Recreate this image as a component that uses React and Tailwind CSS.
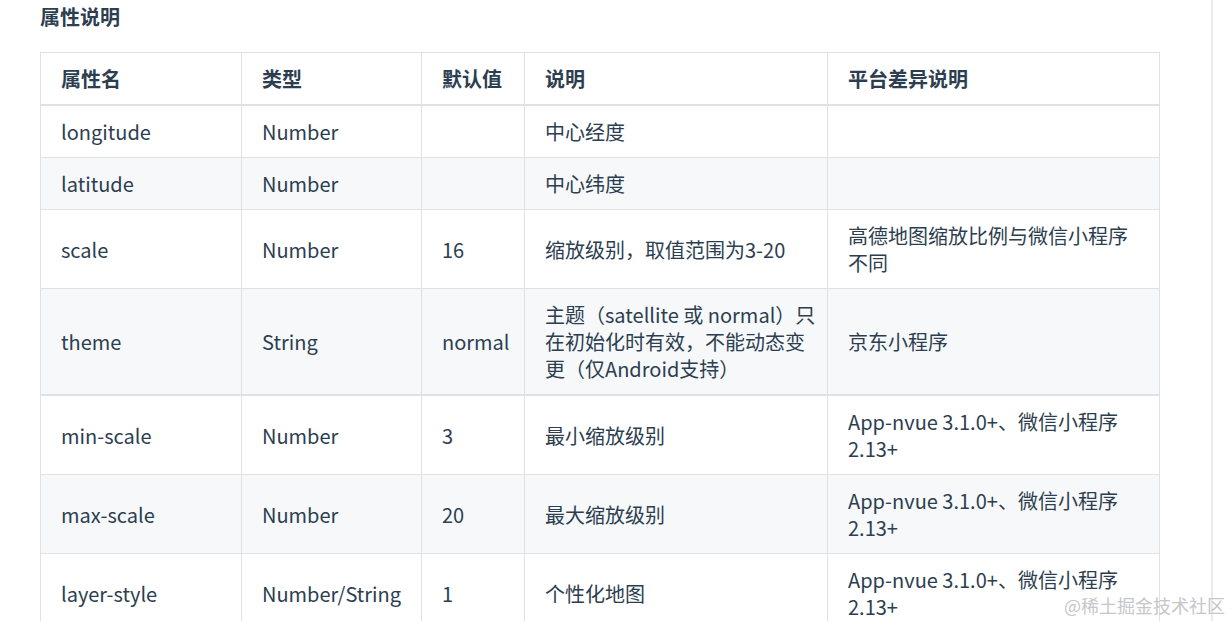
import React from "react";

const rows = [
  ["longitude", "Number", "", ["中心经度"], [""]],
  ["latitude", "Number", "", ["中心纬度"], [""]],
  ["scale", "Number", "16", ["缩放级别，取值范围为3-20"], ["高德地图缩放比例与微信小程序", "不同"]],
  [
    "theme",
    "String",
    "normal",
    ["主题（satellite 或 normal）只", "在初始化时有效，不能动态变", "更（仅Android支持）"],
    ["京东小程序"],
  ],
  ["min-scale", "Number", "3", ["最小缩放级别"], ["App-nvue 3.1.0+、微信小程序", "2.13+"]],
  ["max-scale", "Number", "20", ["最大缩放级别"], ["App-nvue 3.1.0+、微信小程序", "2.13+"]],
  ["layer-style", "Number/String", "1", ["个性化地图"], ["App-nvue 3.1.0+、微信小程序", "2.13+"]],
];

function Lines({ lines }) {
  return lines.map((l, i) => (
    <span key={i} className="block whitespace-nowrap">
      {l || "\u00a0"}
    </span>
  ));
}

export default function App() {
  const font = { fontFamily: '"Noto Sans CJK SC", "Noto Sans", sans-serif' };
  const td = "border border-[#dfe2e5] px-[20px] py-[12px] align-middle";
  return (
    <div
      className="relative flex h-[621px] w-[1232px] overflow-hidden bg-white text-[#2c3e50]"
      style={font}
    >
      <div className="flex-1 pl-[40px] pt-[3px]">
        <h2 className="text-[20px] font-bold leading-[28px]">属性说明</h2>
        <table className="mt-[21px] w-[1119px] table-fixed border-collapse text-[20px] leading-[27px]">
          <colgroup>
            <col className="w-[201px]" />
            <col className="w-[180px]" />
            <col className="w-[103px]" />
            <col className="w-[303px]" />
            <col className="w-[332px]" />
          </colgroup>
          <thead>
            <tr className="bg-white">
              <th className={`${td} border-b-2 text-left font-bold`}>属性名</th>
              <th className={`${td} border-b-2 text-left font-bold`}>类型</th>
              <th className={`${td} border-b-2 text-left font-bold`}>默认值</th>
              <th className={`${td} border-b-2 text-left font-bold`}>说明</th>
              <th className={`${td} border-b-2 text-left font-bold`}>平台差异说明</th>
            </tr>
          </thead>
          <tbody>
            {rows.map((r, i) => {
              const cell = i === 3 ? `${td} border-b-2` : td;
              return (
                <tr key={i} className={i % 2 === 1 ? "bg-[#f6f8fa]" : "bg-white"}>
                  <td className={cell}>{r[0]}</td>
                  <td className={cell}>{r[1]}</td>
                  <td className={cell}>{r[2]}</td>
                  <td className={cell}>
                    <Lines lines={r[3]} />
                  </td>
                  <td className={cell}>
                    <Lines lines={r[4]} />
                  </td>
                </tr>
              );
            })}
          </tbody>
        </table>
      </div>
      <div className="w-[21px] shrink-0 border-l-2 border-[#eaeaea]" />
      <div className="absolute bottom-[5px] right-[7px] text-[18px] leading-[22px] text-[#c4c7cb]">
        @稀土掘金技术社区
      </div>
    </div>
  );
}
